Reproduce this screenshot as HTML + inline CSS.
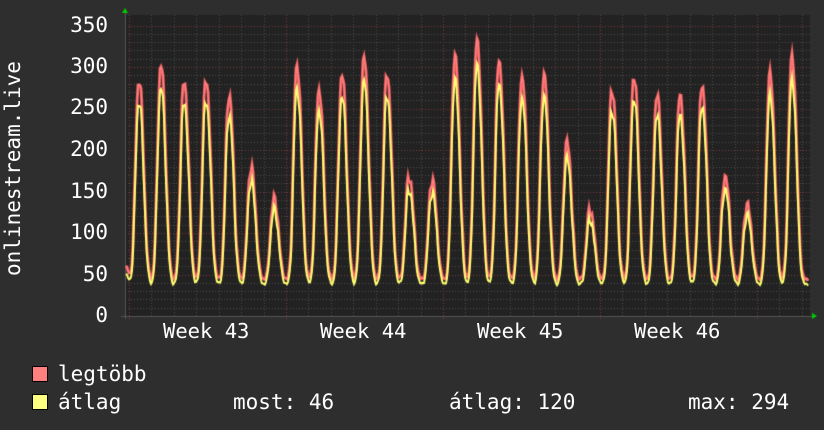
<!DOCTYPE html>
<html><head><meta charset="utf-8"><style>
html,body{margin:0;padding:0;background:#2e2e2e;width:824px;height:430px;overflow:hidden;font-family:"DejaVu Sans Mono","Liberation Mono",monospace;color:#fff}
.t{position:absolute;font-size:21px;white-space:pre;line-height:1}
.y{position:absolute;font-size:21px;text-align:right;width:62px;left:46px;line-height:1}
.w{position:absolute;font-size:20.5px;line-height:1;white-space:pre}
.box{position:absolute;width:14px;height:14px;border:1px solid #000}
canvas{position:absolute;left:0;top:0}
</style></head><body>
<canvas id="c" width="824" height="430"></canvas>
<div class="t" style="left:3px;top:276px;transform-origin:0 0;transform:rotate(-90deg);width:240px">onlinestream.live</div>
<div class="y" style="top:15px">350</div>
<div class="y" style="top:56px">300</div>
<div class="y" style="top:97px">250</div>
<div class="y" style="top:139px">200</div>
<div class="y" style="top:181px">150</div>
<div class="y" style="top:222px">100</div>
<div class="y" style="top:264px">50</div>
<div class="y" style="top:305px">0</div>
<div class="w" style="left:163px;top:321px">Week 43</div>
<div class="w" style="left:320px;top:321px">Week 44</div>
<div class="w" style="left:477px;top:321px">Week 45</div>
<div class="w" style="left:634px;top:321px">Week 46</div>
<div class="box" style="left:32px;top:366px;background:#ff7f7f"></div>
<div class="box" style="left:32px;top:394px;background:#ffff7f"></div>
<div class="t" style="left:58px;top:364px">legtöbb</div>
<div class="t" style="left:58px;top:392px">átlag</div>
<div class="t" style="left:233px;top:392px">most: 46</div>
<div class="t" style="left:449px;top:392px">átlag: 120</div>
<div class="t" style="left:688px;top:392px">max: 294</div>
<script>
var c=document.getElementById('c').getContext('2d');
var L=125,R=810,T=15,B=316;
c.fillStyle='#222';c.fillRect(L,T,R-L,B-T);
function Y(v){return B-v*0.83;}
c.lineWidth=1;
for(var v=10;v<=350;v+=10){var y=Math.round(Y(v))+0.5;c.setLineDash([1,2]);c.strokeStyle=(v%50==0)?'#7a3a3a':'#4a4a4a';c.beginPath();c.moveTo(L,y);c.lineTo(R,y);c.stroke();}
for(var x=129+22.43;x<R;x+=22.43){var xx=Math.round(x)+0.5;c.strokeStyle='#4a4a4a';c.beginPath();c.moveTo(xx,T);c.lineTo(xx,B);c.stroke();}
[129,286,443,600,757].forEach(function(x){c.strokeStyle='#7a3a3a';c.beginPath();c.moveTo(x+0.5,T);c.lineTo(x+0.5,B+3);c.stroke();});
c.setLineDash([]);
c.strokeStyle='#555';c.beginPath();c.moveTo(L-4,B+0.5);c.lineTo(R+3,B+0.5);c.moveTo(L+0.5,T-5);c.lineTo(L+0.5,B+3);c.stroke();
c.fillStyle='#0c0';c.beginPath();c.moveTo(122,13);c.lineTo(128,13);c.lineTo(125,8);c.fill();
c.beginPath();c.moveTo(812,313);c.lineTo(812,319);c.lineTo(817,316);c.fill();
var P=[[139,283],[161,301],[184,281],[206,284],[229,265],[251,178],[274,140],[297,300],[319,272],[342,290],[364,310],[387,290],[409,167],[432,163],[455,310],[477,330],[499,306],[522,288],[544,290],[567,208],[590,127],[612,272],[634,288],[657,265],[680,265],[702,277],[725,168],[747,133],[770,290],[792,311]];
function val(x,avg){var b=avg?38:44;var s=b;if(x<132)s+=(avg?14:18)*Math.max(0,(132-x)/7);
for(var i=0;i<P.length;i++){var d=x-P[i][0];var w=d<0?4.8:6.2;var pk=avg?P[i][1]*0.91:P[i][1];var e=Math.exp(-Math.pow(Math.abs(d/w),2.4));s+=(pk-b)*e;}
var n=Math.sin(x*1.7)*3+Math.sin(x*0.9)*2;return s+n*(s>80?1.5:0.4);}
function draw(avg,col,lw){c.strokeStyle=col;c.lineWidth=lw;c.beginPath();for(var x=L+1;x<=R-2;x++){var y=Y(val(x,avg));if(x==L+1)c.moveTo(x,y);else c.lineTo(x,y);}c.stroke();}
draw(false,'#e85a5a',3);draw(false,'#ff8080',1.5);draw(true,'#ffff70',2);
</script>
</body></html>
